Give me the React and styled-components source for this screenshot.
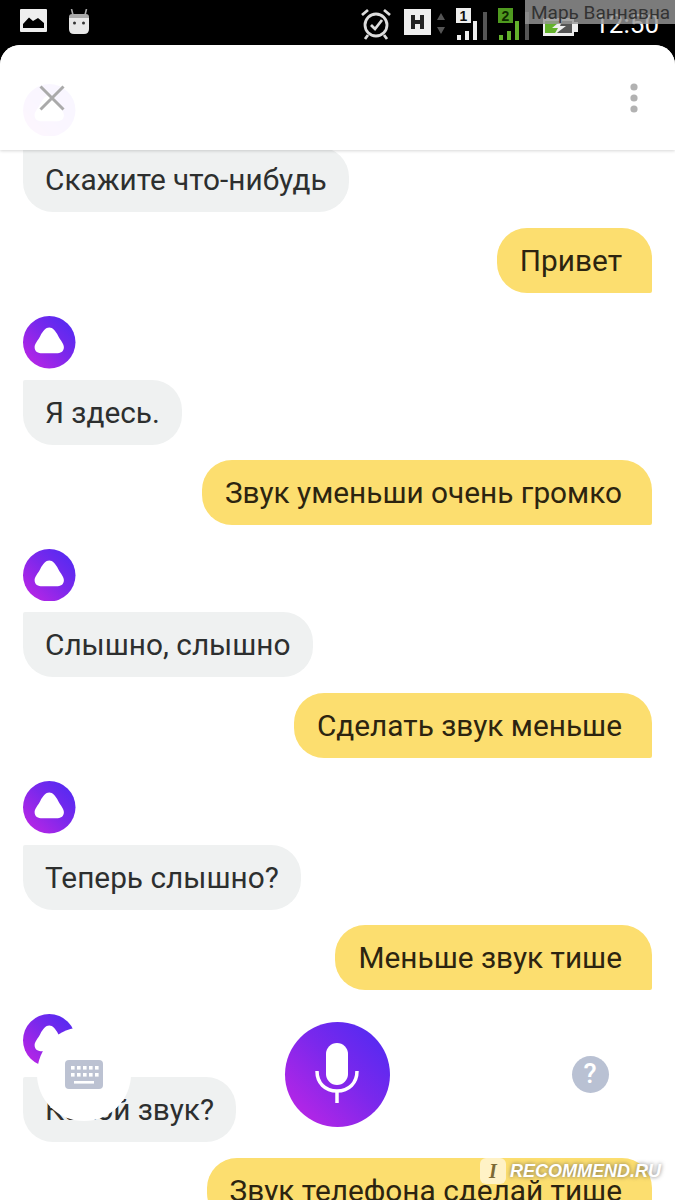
import React from "react";
import styled, { createGlobalStyle } from "styled-components";

const messages = [
  { from: "alice", text: "Скажите что-нибудь" },
  { from: "user", text: "Привет" },
  { from: "alice", text: "Я здесь." },
  { from: "user", text: "Звук уменьши очень громко" },
  { from: "alice", text: "Слышно, слышно" },
  { from: "user", text: "Сделать звук меньше" },
  { from: "alice", text: "Теперь слышно?" },
  { from: "user", text: "Меньше звук тише" },
  { from: "alice", text: "Какой звук?" },
  { from: "user", text: "Звук телефона сделай тише" },
];

const GlobalStyle = createGlobalStyle`
  html, body {
    margin: 0;
    padding: 0;
    background: #000;
    font-family: Roboto, "Liberation Sans", sans-serif;
  }
`;

const Screen = styled.div`
  position: relative;
  width: 675px;
  height: 1200px;
  overflow: hidden;
  background: #000;
  display: flex;
  flex-direction: column;
`;

const StatusBar = styled.div`
  position: relative;
  flex: 0 0 45px;
  height: 45px;
  display: flex;
  align-items: flex-start;
  padding: 0 16px 0 20px;
  box-sizing: border-box;
`;

const StatusLeft = styled.div`
  display: flex;
  gap: 21px;
  padding-top: 9px;
`;

const StatusRight = styled.div`
  margin-left: auto;
  display: flex;
  align-items: flex-start;
  padding-top: 8px;
`;

const StatusItem = styled.div`
  display: flex;
  line-height: 0;
  margin-left: ${(p) => p.$gap || 0}px;
  padding-top: ${(p) => p.$top || 0}px;
`;

const Time = styled.span`
  margin-left: 15px;
  margin-top: 1px;
  color: #fff;
  font-size: 26px;
  line-height: 30px;
  font-weight: 400;
`;

const NameTag = styled.div`
  position: absolute;
  top: 0;
  right: 0;
  width: 150px;
  height: 24px;
  box-sizing: border-box;
  padding-left: 6px;
  background: rgba(150, 150, 150, 0.82);
  color: #333;
  font-size: 19px;
  line-height: 25px;
  white-space: nowrap;
`;

const Sheet = styled.div`
  position: relative;
  flex: 1;
  min-height: 0;
  background: #fff;
  border-radius: 20px 20px 0 0;
  overflow: hidden;
`;

const Header = styled.div`
  position: absolute;
  top: 0;
  left: 0;
  right: 0;
  height: 105px;
  display: flex;
  align-items: center;
  justify-content: space-between;
  padding: 0 37px 0 39px;
  box-sizing: border-box;
  background: rgba(255, 255, 255, 0.96);
  box-shadow: 0 1px 3px rgba(0, 0, 0, 0.16);
`;

const IconButton = styled.div`
  display: flex;
  line-height: 0;
  margin-top: 1px;
`;

const MessageList = styled.div`
  display: flex;
  flex-direction: column;
  padding: 38.5px 23px 0;
`;

const Avatar = styled.div`
  width: 52.5px;
  height: 52.5px;
  margin-top: 23.5px;
  line-height: 0;
  &:first-child {
    margin-top: 0;
  }
`;

const Bubble = styled.div`
  box-sizing: border-box;
  height: 65px;
  padding: ${(p) => (p.$user ? "0 30px 0 23px" : "0 22px")};
  font-size: 29.8px;
  line-height: 66px;
  white-space: nowrap;
  align-self: ${(p) => (p.$user ? "flex-end" : "flex-start")};
  margin-top: ${(p) => (p.$user ? "15.5px" : "11px")};
  background: ${(p) => (p.$user ? "#fcde6f" : "#eff1f1")};
  color: ${(p) => (p.$user ? "#2c2410" : "#2d2f2f")};
  border-radius: ${(p) => (p.$user ? "30px 30px 2px 30px" : "2px 30px 30px 30px")};
`;

const Controls = styled.div`
  position: absolute;
  left: 0;
  right: 0;
  top: 977px;
  height: 104px;
  display: flex;
  align-items: center;
  justify-content: space-between;
  padding: 0 38px 0 37px;
`;

const KeyboardButton = styled.div`
  width: 94px;
  height: 94px;
  border-radius: 50%;
  background: #fff;
  display: flex;
  align-items: center;
  justify-content: center;
`;

const MicButton = styled.div`
  width: 105px;
  height: 105px;
  border-radius: 50%;
  background: linear-gradient(45deg, #c525e4 0%, #7a28ec 55%, #4a2bf3 100%);
  display: flex;
  align-items: center;
  justify-content: center;
`;

const HelpSlot = styled.div`
  width: 94px;
  display: flex;
  justify-content: center;
`;

const HelpButton = styled.div`
  width: 37px;
  height: 37px;
  border-radius: 50%;
  background: #b9c1d3;
  color: #fff;
  font-size: 27px;
  font-weight: 500;
  line-height: 37px;
  text-align: center;
`;

const Watermark = styled.div`
  position: absolute;
  left: 480px;
  top: 1158px;
  display: flex;
  align-items: center;
  gap: 4px;
`;

const WatermarkBadge = styled.span`
  width: 26px;
  height: 26px;
  border-radius: 6px;
  background: rgba(255, 246, 214, 0.85);
  color: #7d6a35;
  font-family: "Liberation Serif", serif;
  font-size: 20px;
  font-style: italic;
  font-weight: 700;
  line-height: 26px;
  text-align: center;
`;

const WatermarkText = styled.span`
  color: #fff;
  font-family: "Liberation Sans", sans-serif;
  font-size: 18px;
  font-style: italic;
  font-weight: 700;
  text-shadow: 0 0 4px rgba(70, 70, 70, 0.75);
  white-space: nowrap;
`;

const ImageIcon = () => (
  <svg width="27" height="23" viewBox="0 0 27 23">
    <rect x="0" y="0" width="27" height="23" rx="1" fill="#eee" />
    <path d="M3 19V15L9 8.5L13 12L18 9L24 14V19Z" fill="#000" />
  </svg>
);

const BotIcon = () => (
  <svg width="22" height="26" viewBox="0 0 22 26">
    <path d="M5 6L3.5 0M17 6L18.5 0" stroke="#aaa" strokeWidth="1.6" />
    <path d="M1 8Q1 5 4 5H18Q21 5 21 8V9H1Z" fill="#aaa" />
    <path d="M1 9H21V20Q21 25 16 25H6Q1 25 1 20Z" fill="#e8e8e8" />
    <circle cx="6.5" cy="14" r="1.5" fill="#333" />
    <circle cx="15.5" cy="14" r="1.5" fill="#333" />
  </svg>
);

const AlarmIcon = () => (
  <svg width="32" height="32" viewBox="0 0 32 32" fill="none" stroke="#ddd">
    <circle cx="16" cy="17" r="11" strokeWidth="2.8" />
    <path d="M11 17L15 21L22 12" strokeWidth="2.8" />
    <path d="M2 7L8 2M30 7L24 2M8 27L5 31M24 27L27 31" strokeWidth="2.8" />
  </svg>
);

const NetworkIcon = () => (
  <svg width="42" height="27" viewBox="0 0 42 27">
    <rect x="0" y="1" width="27" height="26" fill="#eee" />
    <path d="M7 7H11V12H16V7H20V21H16V16H11V21H7Z" fill="#222" />
    <path d="M37 5L41 12H33ZM37 26L41 19H33Z" fill="#555" />
  </svg>
);

const SignalIcon = ({ label, box, color, boxText }) => (
  <svg width="34" height="32" viewBox="0 0 34 32">
    <rect x="1" y="0" width="15" height="15" fill={box} />
    <text x="8.5" y="12.5" textAnchor="middle" fontSize="14" fontWeight="700" fontFamily="Liberation Sans, sans-serif" fill={boxText}>
      {label}
    </text>
    <rect x="2" y="27" width="4" height="5" fill={color} />
    <rect x="10" y="23" width="4" height="9" fill={color} />
    <rect x="18" y="13" width="4" height="19" fill={color} />
    <rect x="28" y="4" width="4" height="28" fill="#555" />
  </svg>
);

const BatteryIcon = () => (
  <svg width="36" height="18" viewBox="0 0 36 18">
    <rect x="0" y="0" width="31" height="18" fill="#eee" />
    <rect x="2" y="3" width="27" height="12" fill="#555" />
    <rect x="2" y="3" width="13" height="12" fill="#63b22b" />
    <rect x="31" y="4" width="4" height="10" fill="#eee" />
    <path d="M20 1L9 10H15L11 17L23 8H17Z" fill="#eee" />
  </svg>
);

const CloseIcon = () => (
  <svg width="26" height="26" viewBox="0 0 26 26" stroke="#aaa" strokeWidth="3">
    <path d="M1.5 1.5L24.5 24.5M24.5 1.5L1.5 24.5" />
  </svg>
);

const MoreIcon = () => (
  <svg width="8" height="30" viewBox="0 0 8 30" fill="#b2b2b2">
    <circle cx="4" cy="4" r="3.6" />
    <circle cx="4" cy="15" r="3.6" />
    <circle cx="4" cy="26" r="3.6" />
  </svg>
);

const AliceIcon = ({ id }) => (
  <svg width="52.5" height="52.5" viewBox="0 0 52 52">
    <defs>
      <linearGradient id={id} x1="0" y1="1" x2="1" y2="0">
        <stop offset="0" stopColor="#c525e4" />
        <stop offset="0.55" stopColor="#7a28ec" />
        <stop offset="1" stopColor="#4a2bf3" />
      </linearGradient>
    </defs>
    <circle cx="26" cy="26" r="26" fill={`url(#${id})`} />
    <path
      d="M26 11.5C29.5 11.5 32 14.5 35 20C37.5 24.5 40.5 27.5 40.5 31C40.5 35.5 37 37 33 37C30 37 28 36.8 26 36.8C24 36.8 22 37 19 37C15 37 11.5 35.5 11.5 31C11.5 27.5 14.5 24.5 17 20C20 14.5 22.5 11.5 26 11.5Z"
      fill="#fff"
    />
  </svg>
);

const KeyboardIcon = () => (
  <svg width="38" height="29" viewBox="0 0 38 29">
    <rect x="0" y="0" width="38" height="29" rx="4" fill="#bcc2d2" />
    {[0, 1, 2, 3, 4].map((i) => (
      <rect key={`a${i}`} x={6 + i * 6} y="6" width="3.6" height="3.6" fill="#fff" />
    ))}
    {[0, 1, 2, 3, 4].map((i) => (
      <rect key={`b${i}`} x={6 + i * 6} y="13" width="3.6" height="3.6" fill="#fff" />
    ))}
    <rect x="9" y="21" width="20" height="2.6" fill="#fff" />
  </svg>
);

const MicIcon = () => (
  <svg width="44" height="62" viewBox="0 0 44 62" fill="none">
    <rect x="11" y="0" width="22" height="42" rx="11" fill="#fff" />
    <path d="M2 28C2 40 10 48 22 48C34 48 42 40 42 28" stroke="#fff" strokeWidth="3.5" />
    <path d="M22 48V60" stroke="#fff" strokeWidth="3.5" />
  </svg>
);

const App = () => {
  return (
    <Screen>
      <GlobalStyle />
      <StatusBar>
        <StatusLeft>
          <ImageIcon />
          <BotIcon />
        </StatusLeft>
        <StatusRight>
          <StatusItem>
            <AlarmIcon />
          </StatusItem>
          <StatusItem $gap={12}>
            <NetworkIcon />
          </StatusItem>
          <StatusItem $gap={9}>
            <SignalIcon label="1" box="#eee" boxText="#111" color="#eee" />
          </StatusItem>
          <StatusItem $gap={8}>
            <SignalIcon label="2" box="#4f9a1f" boxText="#102a00" color="#63b22b" />
          </StatusItem>
          <StatusItem $gap={12} $top={10}>
            <BatteryIcon />
          </StatusItem>
          <Time>12:50</Time>
        </StatusRight>
        <NameTag>Марь Ваннавна</NameTag>
      </StatusBar>

      <Sheet>
        <MessageList>
          {messages.map((m, i) =>
            m.from === "alice" ? (
              <React.Fragment key={i}>
                <Avatar>
                  <AliceIcon id={`alice-${i}`} />
                </Avatar>
                <Bubble>{m.text}</Bubble>
              </React.Fragment>
            ) : (
              <Bubble key={i} $user>
                {m.text}
              </Bubble>
            )
          )}
        </MessageList>

        <Header>
          <IconButton>
            <CloseIcon />
          </IconButton>
          <IconButton>
            <MoreIcon />
          </IconButton>
        </Header>

        <Controls>
          <KeyboardButton>
            <KeyboardIcon />
          </KeyboardButton>
          <MicButton>
            <MicIcon />
          </MicButton>
          <HelpSlot>
            <HelpButton>?</HelpButton>
          </HelpSlot>
        </Controls>
      </Sheet>

      <Watermark>
        <WatermarkBadge>I</WatermarkBadge>
        <WatermarkText>RECOMMEND.RU</WatermarkText>
      </Watermark>
    </Screen>
  );
};

export default App;
